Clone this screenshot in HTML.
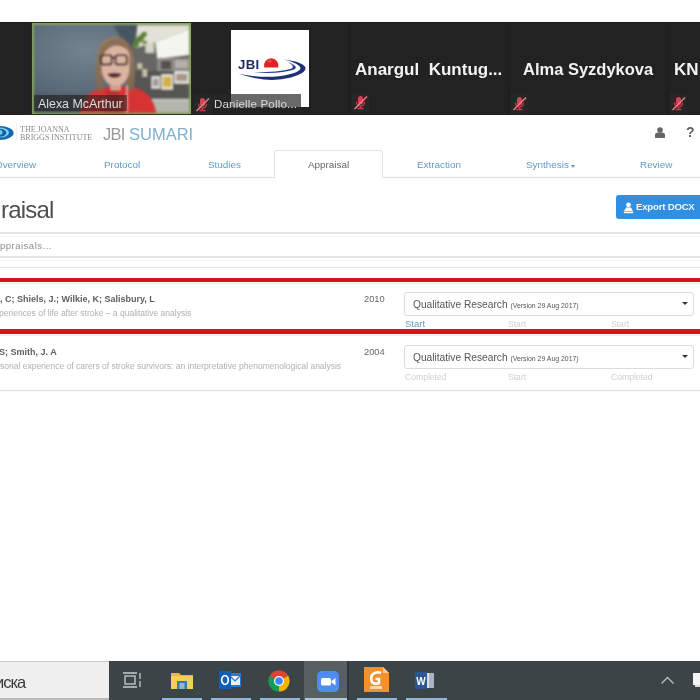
<!DOCTYPE html>
<html><head><meta charset="utf-8">
<style>
*{margin:0;padding:0;box-sizing:border-box}
html,body{width:700px;height:700px;overflow:hidden;background:#fff;font-family:"Liberation Sans",sans-serif}
.a{will-change:transform}
.a{position:absolute;white-space:nowrap;line-height:1}
#zbar{left:0;top:22px;width:700px;height:93px;background:#222}
.tile{top:22px;height:93px;background:#1f1f1f}
.nm{color:#f2f2f2;font-weight:bold;font-size:17px}
.tab{top:160px;font-size:9.9px;color:#5f9bc6}
.au{font-size:9px;font-weight:bold;color:#5e5e5e}
.ti{font-size:8.5px;color:#b0b0b0}
.yr{font-size:9.3px;color:#666}
.sel{width:290px;height:24px;border:1px solid #dcdcdc;border-radius:3px;background:#fff}
.sq{font-size:10.2px;color:#555}
.sq small{font-size:6.9px}
.caret{width:0;height:0;border-left:3px solid transparent;border-right:3px solid transparent;border-top:3px solid #333}
.st{font-size:8.6px;color:#cfcfcf}
.hl{height:1px;background:#e0e0e0;left:0;width:700px}
.mute{width:14px;height:14px}
.ul{top:698px;height:2px;background:#8fb8d8}
</style></head><body>
<!-- ============ ZOOM BAR ============ -->
<div class="a" id="zbar"></div>
<div class="a" style="left:0;top:22px;width:700px;height:1px;background:#1a1a1a"></div>
<div class="a" style="left:348px;top:23px;width:3px;height:92px;background:#1f1f1f"></div>
<div class="a" style="left:507px;top:23px;width:3px;height:92px;background:#1f1f1f"></div>
<div class="a" style="left:666px;top:23px;width:3px;height:92px;background:#1f1f1f"></div>
<!-- Alexa tile -->
<div class="a" style="left:31px;top:22px;width:161px;height:93px;background:#22300e"></div>
<div class="a" style="left:32px;top:23px;width:159px;height:91px;background:#84a060"></div>
<svg class="a" id="vid" style="left:34px;top:25px;filter:blur(0.8px)" width="155" height="88" viewBox="0 0 156 88">
<defs>
<radialGradient id="wall" cx="0.35" cy="0.3" r="0.75"><stop offset="0" stop-color="#74848f"/><stop offset="0.6" stop-color="#5a6a78"/><stop offset="1" stop-color="#4a5662"/></radialGradient>
<linearGradient id="hair" x1="0" y1="0" x2="0" y2="1"><stop offset="0" stop-color="#9a7e62"/><stop offset="1" stop-color="#806650"/></linearGradient>
</defs>
<rect x="-3" y="-3" width="162" height="94" fill="url(#wall)"/>
<polygon points="80,0 106,0 100,26 88,14" fill="#3c4856" opacity="0.7"/>
<rect x="0" y="70" width="60" height="18" fill="#4a5560"/>
<!-- right room -->
<polygon points="104,0 156,0 156,88 99,88 99,22" fill="#666664"/>
<polygon points="104,0 156,0 156,4 122,17 112,20 102,23" fill="#e2e2d8"/>
<polygon points="122,17 156,4 156,30 124,34" fill="#f4f5ef"/>
<rect x="112" y="18" width="9" height="10" fill="#d8d4c8"/>
<rect x="124" y="33" width="32" height="13" fill="#8e8c88"/>
<rect x="128" y="36" width="10" height="8" fill="#55504c"/>
<rect x="142" y="35" width="13" height="8" fill="#b4b0aa"/>
<rect x="99" y="46" width="57" height="30" fill="#555553"/>
<rect x="118" y="51" width="9" height="13" fill="#dcdcd8"/><rect x="120" y="54" width="5" height="7" fill="#9a9690"/>
<rect x="128" y="49" width="12" height="16" fill="#e4dfcf"/><rect x="130" y="52" width="8" height="10" fill="#d4b04a"/>
<rect x="141" y="46" width="15" height="13" fill="#e2e0dc"/><rect x="143" y="49" width="11" height="7" fill="#a89888"/>
<rect x="104" y="38" width="5" height="6" fill="#c8c0a8"/><rect x="109" y="44" width="5" height="8" fill="#c8c0a8"/>
<rect x="99" y="74" width="57" height="2" fill="#d8d8d2"/>
<rect x="99" y="76" width="57" height="12" fill="#b4b6ae"/>
<g fill="#5c7d3c"><ellipse cx="106" cy="14" rx="5" ry="3" transform="rotate(-30 106 14)"/><ellipse cx="110" cy="10" rx="4" ry="2.5" transform="rotate(-40 110 10)"/><ellipse cx="102" cy="20" rx="4" ry="2.5" transform="rotate(-20 102 20)"/><ellipse cx="111" cy="17" rx="3" ry="2" fill="#7a9a50"/></g>
<!-- shirt -->
<path d="M46 88 Q50 70 64 64 L78 61 L96 61 Q112 64 118 74 Q122 82 123 88Z" fill="#d63434"/>
<path d="M70 88 L74 64 L84 64 L88 88Z" fill="#9a2a2a" opacity="0.45"/>
<!-- hair back -->
<path d="M63 66 Q60 34 67 19 Q75 11 82 11.5 Q96 12.5 100 30 Q103 52 100 66 L93 66 L93 42 L70 42 L69 66Z" fill="url(#hair)"/>
<!-- face -->
<path d="M68 30 Q69 21 82 20 Q95 21 96 30 L96 46 Q94 60 82 62 Q71 60 68 46Z" fill="#dcb3a0"/>
<path d="M76 60 L88 60 L87 66 L77 66Z" fill="#cfa28e"/>
<!-- bangs -->
<path d="M65 36 Q66 16 82 13 Q99 14 100 34 Q97 22 84 20 Q71 21 68 36Z" fill="#8a6e55"/>
<!-- glasses -->
<g fill="none" stroke="#33282a" stroke-width="1.4"><rect x="67.3" y="30" width="11" height="9.5" rx="2.5"/><rect x="82" y="30" width="11.5" height="9.5" rx="2.5"/><path d="M78.3 32.5 L82 32.5"/></g>
<!-- mouth -->
<ellipse cx="81" cy="49.5" rx="6.3" ry="3" fill="#5e2626"/>
<path d="M75.5 48 Q81 46.8 86.5 48" stroke="#e8e0dc" stroke-width="1.1" fill="none"/>
<path d="M93.5 60 L93.5 88" stroke="#ece4e4" stroke-width="1.2"/>
</svg>
<div class="a" style="left:34px;top:95px;width:93px;height:16px;background:rgba(30,30,30,.55)"></div>
<div class="a" style="left:38px;top:98px;font-size:12.4px;color:#dedede">Alexa McArthur</div>

<!-- Danielle tile -->
<svg class="a" style="left:231px;top:30px;filter:blur(0.5px)" width="78" height="77" viewBox="0 0 78 77">
<rect width="78" height="77" fill="#fff"/>
<text x="7" y="38.6" font-family="Liberation Sans" font-weight="bold" font-size="13.2" fill="#1c2c5c" letter-spacing="0.3">JBI</text>
<path d="M33.2 37.6 A7.3 7.3 0 1 1 47.2 37.6 Z" fill="#e02424"/>
<ellipse cx="38.5" cy="31" rx="2.5" ry="1.5" fill="#ff6a6a" opacity="0.5"/>
<path d="M7.5 43.5 Q36 54 60 47.5 Q75 43 74.5 38 Q73 32 53 29.5 Q69 33.5 69.5 38.5 Q67 44.5 42 46.8 Q22 47.2 7.5 43.5Z" fill="#1e3273"/>
<path d="M23 42.3 Q48 44.5 63 39.5 Q68.5 36.5 57 32 Q64.5 36 60.5 38.8 Q48 42.3 23 42.3Z" fill="#22408e"/>
</svg>
<div class="a" style="left:193px;top:94px;width:108px;height:15px;background:rgba(40,40,40,.7)"></div>
<div class="a" style="left:214px;top:97.5px;font-size:11.6px;letter-spacing:0.15px;color:#d8d8d8">Danielle Pollo...</div>

<svg class="a" style="left:194px;top:95px;filter:blur(0.4px)" width="17" height="19" viewBox="0 0 17 19"><rect width="17" height="19" fill="#272727"/><rect x="6" y="3" width="5" height="8.5" rx="2.5" fill="#d24455"/><path d="M4.5 8.5 Q4.5 13 8.5 13 Q12.5 13 12.5 8.5" fill="none" stroke="#c43a4a" stroke-width="1.3"/><path d="M8.5 13 L8.5 15.5 M5.5 15.5 L11.5 15.5" stroke="#c43a4a" stroke-width="1.3"/><path d="M2.5 16 L15 3.5" stroke="#e88088" stroke-width="1.5"/></svg>
<svg class="a" style="left:352px;top:93px;filter:blur(0.4px)" width="17" height="19" viewBox="0 0 17 19"><rect width="17" height="19" fill="#272727"/><rect x="6" y="3" width="5" height="8.5" rx="2.5" fill="#d24455"/><path d="M4.5 8.5 Q4.5 13 8.5 13 Q12.5 13 12.5 8.5" fill="none" stroke="#c43a4a" stroke-width="1.3"/><path d="M8.5 13 L8.5 15.5 M5.5 15.5 L11.5 15.5" stroke="#c43a4a" stroke-width="1.3"/><path d="M2.5 16 L15 3.5" stroke="#e88088" stroke-width="1.5"/></svg>
<svg class="a" style="left:511px;top:94px;filter:blur(0.4px)" width="17" height="19" viewBox="0 0 17 19"><rect width="17" height="19" fill="#272727"/><rect x="6" y="3" width="5" height="8.5" rx="2.5" fill="#d24455"/><path d="M4.5 8.5 Q4.5 13 8.5 13 Q12.5 13 12.5 8.5" fill="none" stroke="#c43a4a" stroke-width="1.3"/><path d="M8.5 13 L8.5 15.5 M5.5 15.5 L11.5 15.5" stroke="#c43a4a" stroke-width="1.3"/><path d="M2.5 16 L15 3.5" stroke="#e88088" stroke-width="1.5"/></svg>
<svg class="a" style="left:670px;top:94px;filter:blur(0.4px)" width="17" height="19" viewBox="0 0 17 19"><rect width="17" height="19" fill="#272727"/><rect x="6" y="3" width="5" height="8.5" rx="2.5" fill="#d24455"/><path d="M4.5 8.5 Q4.5 13 8.5 13 Q12.5 13 12.5 8.5" fill="none" stroke="#c43a4a" stroke-width="1.3"/><path d="M8.5 13 L8.5 15.5 M5.5 15.5 L11.5 15.5" stroke="#c43a4a" stroke-width="1.3"/><path d="M2.5 16 L15 3.5" stroke="#e88088" stroke-width="1.5"/></svg>
<div class="a nm" style="left:355px;top:61px">Anargul&nbsp; Kuntug...</div>
<div class="a nm" style="left:523px;top:61px;font-size:16.5px">Alma Syzdykova</div>
<div class="a nm" style="left:674px;top:61px">KN</div>

<!-- ============ PAGE ============ -->
<!-- header logo -->
<svg class="a" style="left:0;top:124px;filter:blur(0.4px)" width="16" height="18" viewBox="0 0 16 18">
<ellipse cx="-1" cy="9" rx="14.6" ry="6.9" fill="#1768b4"/>
<ellipse cx="-1" cy="8.6" rx="10" ry="5" fill="#7cd4f2"/>
<ellipse cx="-1" cy="8.8" rx="7.4" ry="4" fill="#1b5c9e"/>
<ellipse cx="-1" cy="8.4" rx="3.6" ry="2.6" fill="#6cc8ec"/>
</svg>
<div class="a" style="left:16px;top:124px;width:1px;height:16px;background:#efefef"></div>
<div class="a" style="left:20px;top:126px;font-family:'Liberation Serif',serif;font-size:8px;line-height:8px;color:#8a8a8a">THE JOANNA<br>BRIGGS INSTITUTE</div>
<div class="a" style="left:103px;top:125.5px;font-size:16.5px;color:#999;letter-spacing:-0.8px;-webkit-text-stroke:0px">JBI</div>
<div class="a" style="left:129px;top:125.5px;font-size:16.5px;color:#7fb0d0;letter-spacing:0px">SUMARI</div>
<!-- header icons -->
<svg class="a" style="left:655px;top:127px" width="10" height="11" viewBox="0 0 10 11"><circle cx="5" cy="3" r="2.8" fill="#666"/><path d="M0 11 L0 8 Q0 5.5 3 5.5 L7 5.5 Q10 5.5 10 8 L10 11Z" fill="#666"/></svg>
<div class="a" style="left:686px;top:125px;font-size:14px;font-weight:bold;color:#5e5e5e">?</div>

<!-- tabs -->
<div class="a hl" style="top:177px"></div>
<div class="a" style="left:274px;top:150px;width:109px;height:28px;background:#fff;border:1px solid #e2e2e2;border-bottom:none;border-radius:3px 3px 0 0"></div>
<div class="a tab" style="left:-5px">Overview</div>
<div class="a tab" style="left:104px">Protocol</div>
<div class="a tab" style="left:208px">Studies</div>
<div class="a tab" style="left:308px;color:#666">Appraisal</div>
<div class="a tab" style="left:417px">Extraction</div>
<div class="a tab" style="left:526px">Synthesis</div>
<div class="a caret" style="left:571px;top:165px;border-left-width:2.5px;border-right-width:2.5px;border-top:3px solid #5f9bc6"></div>
<div class="a tab" style="left:640px">Review</div>

<!-- heading -->
<div class="a" style="left:1px;top:198px;font-size:24px;letter-spacing:-0.8px;color:#4e4e4e">raisal</div>
<div class="a" style="left:616px;top:195px;width:90px;height:24px;background:#2f8fe2;border-radius:3px"></div>
<svg class="a" style="left:623px;top:202px" width="12" height="12" viewBox="0 0 12 12"><circle cx="5.5" cy="2.8" r="2.4" fill="#fff"/><path d="M3 5.6 L8 5.6 L10 9.2 L1 9.2Z" fill="#fff"/><rect x="0.8" y="9.8" width="9.4" height="1.4" fill="#fff"/></svg>
<div class="a" style="left:636px;top:201.5px;font-size:9.6px;font-weight:bold;letter-spacing:-0.2px;color:#f4f8fc">Export DOCX</div>

<!-- search -->
<div class="a hl" style="top:232px;height:2px;background:#e6e6e6"></div>
<div class="a hl" style="top:256px;height:2px;background:#e6e6e6"></div>
<div class="a hl" style="top:236px;background:#f6f6f6"></div>
<div class="a hl" style="top:260px;background:#f6f6f6"></div>
<div class="a" style="left:0;top:241px;font-size:9.5px;letter-spacing:0.5px;color:#8e8e8e">ppraisals...</div>
<div class="a hl" style="top:267px;background:#e4e4e4"></div>

<!-- rows -->
<div class="a" style="left:0;top:278px;width:700px;height:4px;background:#d8131a"></div>
<div class="a" style="left:0;top:329px;width:700px;height:5px;background:#d8131a"></div>
<div class="a hl" style="top:283px;background:#f8e4e4"></div>
<div class="a hl" style="top:335px;background:#f8e4e4"></div>
<div class="a hl" style="top:390px"></div>

<div class="a au" style="left:0;top:295px">, C; Shiels, J.; Wilkie, K; Salisbury, L</div>
<div class="a ti" style="left:-1px;top:309px">periences of life after stroke &ndash; a qualitative analysis</div>
<div class="a au" style="left:-1.5px;top:348px">S; Smith, J. A</div>
<div class="a ti" style="left:0;top:362px">sonal experience of carers of stroke survivors: an interpretative phenomenological analysis</div>
<div class="a yr" style="left:364px;top:295px">2010</div>
<div class="a yr" style="left:364px;top:348px">2004</div>
<div class="a sel" style="left:404px;top:292px"></div>
<div class="a sel" style="left:404px;top:345px"></div>
<div class="a sq" style="left:413px;top:300px">Qualitative Research <small>(Version 29 Aug 2017)</small></div>
<div class="a sq" style="left:413px;top:353px">Qualitative Research <small>(Version 29 Aug 2017)</small></div>
<div class="a caret" style="left:682px;top:302px"></div>
<div class="a caret" style="left:682px;top:355px"></div>
<div class="a st" style="left:405px;top:319px;color:#5f9bc6;font-size:9.5px">Start</div>
<div class="a st" style="left:508px;top:320px">Start</div>
<div class="a st" style="left:611px;top:320px">Start</div>
<div class="a st" style="left:405px;top:373px">Completed</div>
<div class="a st" style="left:508px;top:373px">Start</div>
<div class="a st" style="left:611px;top:373px">Completed</div>

<!-- ============ TASKBAR ============ -->
<div class="a" style="left:0;top:661px;width:700px;height:39px;background:#3b4547"></div>
<div class="a" style="left:0;top:661px;width:109px;height:39px;background:#f0f0f0;border-top:1px solid #c8c8c8"></div>
<div class="a" style="left:-5px;top:673.5px;font-size:16.5px;color:#3a3a3a;letter-spacing:-1px">иска</div>
<div class="a" style="left:0;top:698px;width:109px;height:2px;background:#bbb"></div>
<div class="a" style="left:304px;top:661px;width:43px;height:39px;background:#566062"></div>
<div class="a" style="left:347px;top:661px;width:2px;height:39px;background:#2e3638"></div>
<!-- task view -->
<svg class="a" style="left:122px;top:672px;filter:blur(0.4px)" width="20" height="16" viewBox="0 0 20 16"><g fill="none" stroke="#c8cccc" stroke-width="1.3"><path d="M1 1 H15 M1 15 H15"/><rect x="3" y="4" width="10" height="8"/><path d="M18 1 V7 M18 9 V15"/></g></svg>
<!-- explorer -->
<svg class="a" style="left:171px;top:672px;filter:blur(0.4px)" width="22" height="17" viewBox="0 0 22 17"><path d="M0 1 H8 L10 3 H22 V17 H0Z" fill="#e8b840"/><rect x="0" y="4" width="22" height="13" fill="#f5cf5a"/><rect x="6" y="9" width="10" height="8" fill="#3e7c9a"/><rect x="8.5" y="11" width="5" height="6" fill="#8fb8c8"/></svg>
<!-- outlook -->
<svg class="a" style="left:219px;top:671px;filter:blur(0.4px)" width="22" height="18" viewBox="0 0 22 18"><rect x="9" y="2" width="13" height="14" fill="#2a7ad0"/><rect x="11" y="5" width="10" height="9" fill="#e8f0f8"/><path d="M11 5 L16 10 L21 5" fill="none" stroke="#2a7ad0" stroke-width="1.2"/><rect x="0" y="0" width="12" height="18" fill="#0f5fb8"/><ellipse cx="6" cy="9" rx="3.3" ry="4.3" fill="none" stroke="#fff" stroke-width="1.8"/></svg>
<!-- chrome -->
<svg class="a" style="left:268px;top:670px;filter:blur(0.4px)" width="22" height="22" viewBox="0 0 22 22"><circle cx="11" cy="11" r="10.5" fill="#db4437"/><path d="M11 11 L1.9 5.75 A10.5 10.5 0 0 0 11 21.5Z" fill="#0f9d58"/><path d="M11 11 L11 21.5 A10.5 10.5 0 0 0 20.1 5.75Z" fill="#f4b400"/><path d="M11 11 L20.1 5.75 A10.5 10.5 0 0 0 1.9 5.75Z" fill="#db4437"/><circle cx="11" cy="11" r="5" fill="#fff"/><circle cx="11" cy="11" r="3.8" fill="#4285f4"/></svg>
<!-- zoom -->
<svg class="a" style="left:317px;top:671px;filter:blur(0.4px)" width="22" height="21" viewBox="0 0 22 21"><rect width="22" height="21" rx="5" fill="#4d8cf0"/><rect x="4" y="7" width="10" height="7.5" rx="1.5" fill="#fff"/><path d="M14.5 10 L18.5 7 V14.5 L14.5 11.5Z" fill="#fff"/></svg>
<!-- foxit -->
<svg class="a" style="left:364px;top:667px;filter:blur(0.4px)" width="25" height="25" viewBox="0 0 25 25"><path d="M0 0 H19 L25 6 V25 H0Z" fill="#f0902e"/><path d="M19 0 V6 H25Z" fill="#f8c89a"/><path d="M17 6 Q13 4 9 7 Q6 10 8 15 Q11 18 15 16 L15 12 L11.5 12" fill="none" stroke="#fff" stroke-width="2.6"/><rect x="6" y="19" width="12" height="3" fill="#fde6d0" opacity="0.8"/></svg>
<!-- word -->
<svg class="a" style="left:415px;top:672px;filter:blur(0.4px)" width="20" height="17" viewBox="0 0 20 17"><rect x="8" y="1" width="11" height="15" fill="#d8dde6"/><rect x="14" y="1" width="5" height="15" fill="#aab4c4"/><rect x="0" y="0" width="12" height="17" fill="#2b5797"/><text x="1.3" y="13" font-family="Liberation Sans" font-weight="bold" font-size="10" fill="#fff">W</text></svg>
<!-- underlines -->
<div class="a ul" style="left:162px;width:40px"></div>
<div class="a ul" style="left:211px;width:40px"></div>
<div class="a ul" style="left:260px;width:40px"></div>
<div class="a ul" style="left:305px;width:42px;background:#a8c8e4"></div>
<div class="a ul" style="left:357px;width:40px"></div>
<div class="a ul" style="left:406px;width:41px"></div>
<!-- tray -->
<svg class="a" style="left:660px;top:676px" width="15" height="9" viewBox="0 0 15 9"><path d="M1.5 7.5 L7.5 1.5 L13.5 7.5" fill="none" stroke="#b8bcbc" stroke-width="1.4"/></svg>
<div class="a" style="left:693px;top:673px;width:8px;height:12px;background:#f4f4f4"></div>
<div class="a" style="left:695px;top:685px;width:6px;height:2px;background:#ddd"></div>
</body></html>
